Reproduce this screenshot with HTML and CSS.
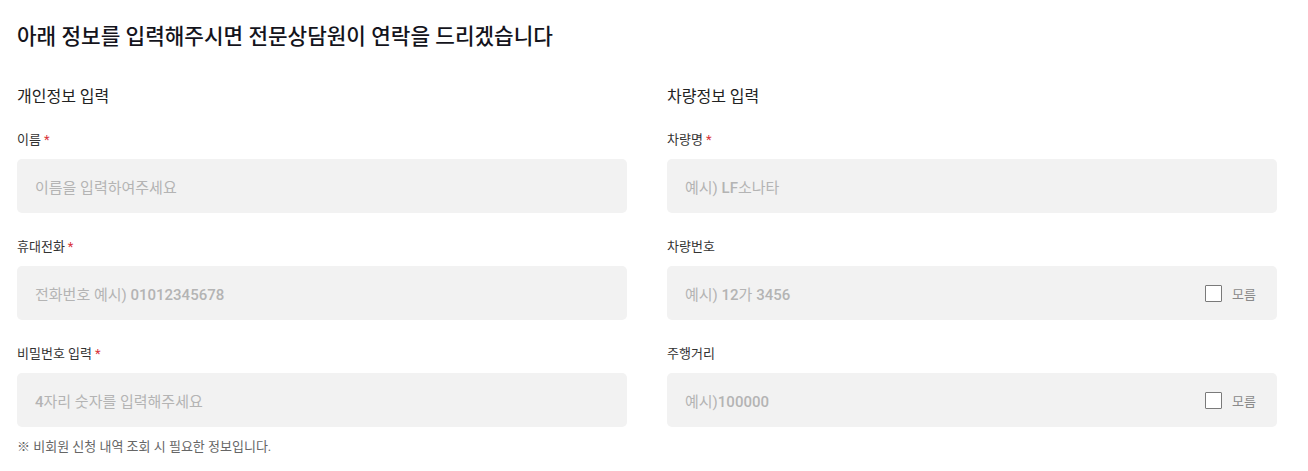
FILE: index.html
```html
<!DOCTYPE html>
<html lang="ko">
<head>
<meta charset="utf-8">
<title>상담 신청</title>
<link rel="stylesheet" href="styles.css">
</head>
<body>
<div class="page">
  <h1 class="title">아래 정보를 입력해주시면 전문상담원이 연락을 드리겠습니다</h1>
  <div class="columns">
    <section class="col">
      <h2 class="section-title">개인정보 입력</h2>
      <div class="group">
        <div class="label">이름<span class="req">*</span></div>
        <div class="field"><span class="ph">이름을 입력하여주세요</span></div>
      </div>
      <div class="group">
        <div class="label">휴대전화<span class="req">*</span></div>
        <div class="field"><span class="ph">전화번호 예시) <span class="latin">01012345678</span></span></div>
      </div>
      <div class="group">
        <div class="label">비밀번호 입력<span class="req">*</span></div>
        <div class="field"><span class="ph"><span class="latin">4</span>자리 숫자를 입력해주세요</span></div>
      </div>
      <p class="note">※ 비회원 신청 내역 조회 시 필요한 정보입니다.</p>
    </section>
    <section class="col">
      <h2 class="section-title">차량정보 입력</h2>
      <div class="group">
        <div class="label">차량명<span class="req">*</span></div>
        <div class="field"><span class="ph">예시) <span class="latin">LF</span>소나타</span></div>
      </div>
      <div class="group">
        <div class="label">차량번호</div>
        <div class="field"><span class="ph">예시) <span class="latin">12</span>가 <span class="latin">3456</span></span>
          <label class="unknown"><span class="check"></span><span class="unknown-text">모름</span></label>
        </div>
      </div>
      <div class="group">
        <div class="label">주행거리</div>
        <div class="field"><span class="ph">예시)<span class="latin">100000</span></span>
          <label class="unknown"><span class="check"></span><span class="unknown-text">모름</span></label>
        </div>
      </div>
    </section>
  </div>
</div>
</body>
</html>
```
FILE: styles.css
```css
* { box-sizing: border-box; }
html, body { margin: 0; padding: 0; background: #fff; }
body {
  font-family: Roboto, "Noto Sans CJK KR", "Noto Sans", sans-serif;
  color: #222;
}
.page {
  padding: 22px 31px 0 17px;
}
.title {
  margin: 0 0 33px;
  font-size: 21.3px;
  line-height: 30px;
  font-weight: 500;
  color: #14141c;
}
.columns {
  display: grid;
  grid-template-columns: 610px 610px;
  column-gap: 40px;
}
.section-title {
  margin: 0 0 21px;
  font-size: 16px;
  line-height: 24px;
  font-weight: 400;
  color: #222;
}
.group + .group { margin-top: 24px; }
.label {
  font-size: 13px;
  line-height: 20px;
  color: #333;
  margin-bottom: 9px;
}
.req {
  color: #d9343a;
  margin-left: 3px;
}
.field {
  height: 54px;
  background: #f2f2f2;
  border-radius: 5px;
  padding: 0 21px 0 18px;
  display: flex;
  align-items: center;
  justify-content: space-between;
}
.ph {
  font-size: 15px;
  color: #b4b4b4;
}
.latin {
  font-weight: 500;
}
.unknown {
  display: flex;
  align-items: center;
  gap: 10px;
}
.check {
  width: 17px;
  height: 17px;
  border: 1px solid #7a7a7a;
  background: #fff;
  border-radius: 1px;
}
.unknown-text {
  font-size: 13px;
  color: #8a8a8a;
}
.note {
  margin: 10px 0 0;
  font-size: 13px;
  line-height: 20px;
  color: #666;
}
```
